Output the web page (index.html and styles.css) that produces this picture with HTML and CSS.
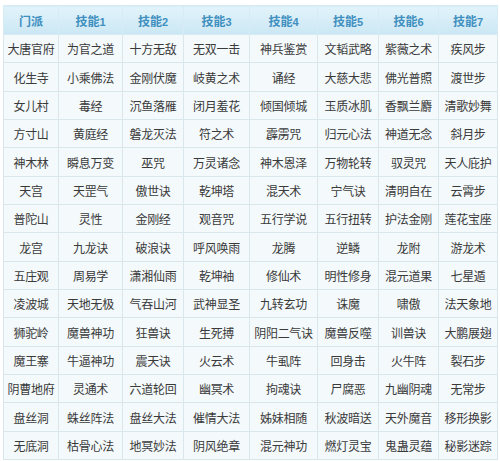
FILE: index.html
```html
<!DOCTYPE html>
<html lang="zh">
<head>
<meta charset="utf-8">
<link rel="stylesheet" href="styles.css">
</head>
<body>
<table class="skills">
  <colgroup>
    <col class="c0"><col class="c1"><col class="c2"><col class="c3"><col class="c4"><col class="c5"><col class="c6"><col class="c7">
  </colgroup>
  <thead>
    <tr><th>门派</th><th>技能<span class="num">1</span></th><th>技能<span class="num">2</span></th><th>技能<span class="num">3</span></th><th>技能<span class="num">4</span></th><th>技能<span class="num">5</span></th><th>技能<span class="num">6</span></th><th>技能<span class="num">7</span></th></tr>
  </thead>
  <tbody>
    <tr><td>大唐官府</td><td>为官之道</td><td>十方无敌</td><td>无双一击</td><td>神兵鉴赏</td><td>文韬武略</td><td>紫薇之术</td><td>疾风步</td></tr>
    <tr><td>化生寺</td><td>小乘佛法</td><td>金刚伏魔</td><td>岐黄之术</td><td>诵经</td><td>大慈大悲</td><td>佛光普照</td><td>渡世步</td></tr>
    <tr><td>女儿村</td><td>毒经</td><td>沉鱼落雁</td><td>闭月羞花</td><td>倾国倾城</td><td>玉质冰肌</td><td>香飘兰麝</td><td>清歌妙舞</td></tr>
    <tr><td>方寸山</td><td>黄庭经</td><td>磐龙灭法</td><td>符之术</td><td>霹雳咒</td><td>归元心法</td><td>神道无念</td><td>斜月步</td></tr>
    <tr><td>神木林</td><td>瞬息万变</td><td>巫咒</td><td>万灵诸念</td><td>神木恩泽</td><td>万物轮转</td><td>驭灵咒</td><td>天人庇护</td></tr>
    <tr><td>天宫</td><td>天罡气</td><td>傲世诀</td><td>乾坤塔</td><td>混天术</td><td>宁气诀</td><td>清明自在</td><td>云霄步</td></tr>
    <tr><td>普陀山</td><td>灵性</td><td>金刚经</td><td>观音咒</td><td>五行学说</td><td>五行扭转</td><td>护法金刚</td><td>莲花宝座</td></tr>
    <tr><td>龙宫</td><td>九龙诀</td><td>破浪诀</td><td>呼风唤雨</td><td>龙腾</td><td>逆鳞</td><td>龙附</td><td>游龙术</td></tr>
    <tr><td>五庄观</td><td>周易学</td><td>潇湘仙雨</td><td>乾坤袖</td><td>修仙术</td><td>明性修身</td><td>混元道果</td><td>七星遁</td></tr>
    <tr><td>凌波城</td><td>天地无极</td><td>气吞山河</td><td>武神显圣</td><td>九转玄功</td><td>诛魔</td><td>啸傲</td><td>法天象地</td></tr>
    <tr><td>狮驼岭</td><td>魔兽神功</td><td>狂兽诀</td><td>生死搏</td><td>阴阳二气诀</td><td>魔兽反噬</td><td>训兽诀</td><td>大鹏展翅</td></tr>
    <tr><td>魔王寨</td><td>牛逼神功</td><td>震天诀</td><td>火云术</td><td>牛虱阵</td><td>回身击</td><td>火牛阵</td><td>裂石步</td></tr>
    <tr><td>阴曹地府</td><td>灵通术</td><td>六道轮回</td><td>幽冥术</td><td>拘魂诀</td><td>尸腐恶</td><td>九幽阴魂</td><td>无常步</td></tr>
    <tr><td>盘丝洞</td><td>蛛丝阵法</td><td>盘丝大法</td><td>催情大法</td><td>姊妹相随</td><td>秋波暗送</td><td>天外魔音</td><td>移形换影</td></tr>
    <tr><td>无底洞</td><td>枯骨心法</td><td>地冥妙法</td><td>阴风绝章</td><td>混元神功</td><td>燃灯灵宝</td><td>鬼蛊灵蕴</td><td>秘影迷踪</td></tr>
  </tbody>
</table>
</body>
</html>
```

FILE: styles.css
```css
html, body {
  margin: 0;
  padding: 0;
  background: #ffffff;
}
body {
  padding: 5px 0 0 3px;
  font-family: "Noto Sans CJK SC", "Liberation Sans", sans-serif;
}
.skills {
  border-collapse: collapse;
  table-layout: fixed;
  width: 494px;
  font-size: 12px;
}
.c0 { width: 55px; }
.c1 { width: 64px; }
.c2 { width: 61px; }
.c3 { width: 66px; }
.c4 { width: 68px; }
.c5 { width: 61px; }
.c6 { width: 60px; }
.c7 { width: 59px; }
.skills th {
  height: 28px;
  padding: 0;
  font-weight: bold;
  color: #3f8fbf;
  background: linear-gradient(#e2f3fa, #cbe7f4);
  border: 1px solid #d6ebf4;
  text-align: center;
  white-space: nowrap;
}
.skills .num {
  font-family: "Liberation Sans", sans-serif;
  font-size: 11px;
}
.skills td {
  height: 27.35px;
  padding: 0;
  color: #3a3a3a;
  background: #f4f9fb;
  border: 1px solid #d9e7ed;
  text-align: center;
  white-space: nowrap;
  letter-spacing: -0.3px;
}
```
